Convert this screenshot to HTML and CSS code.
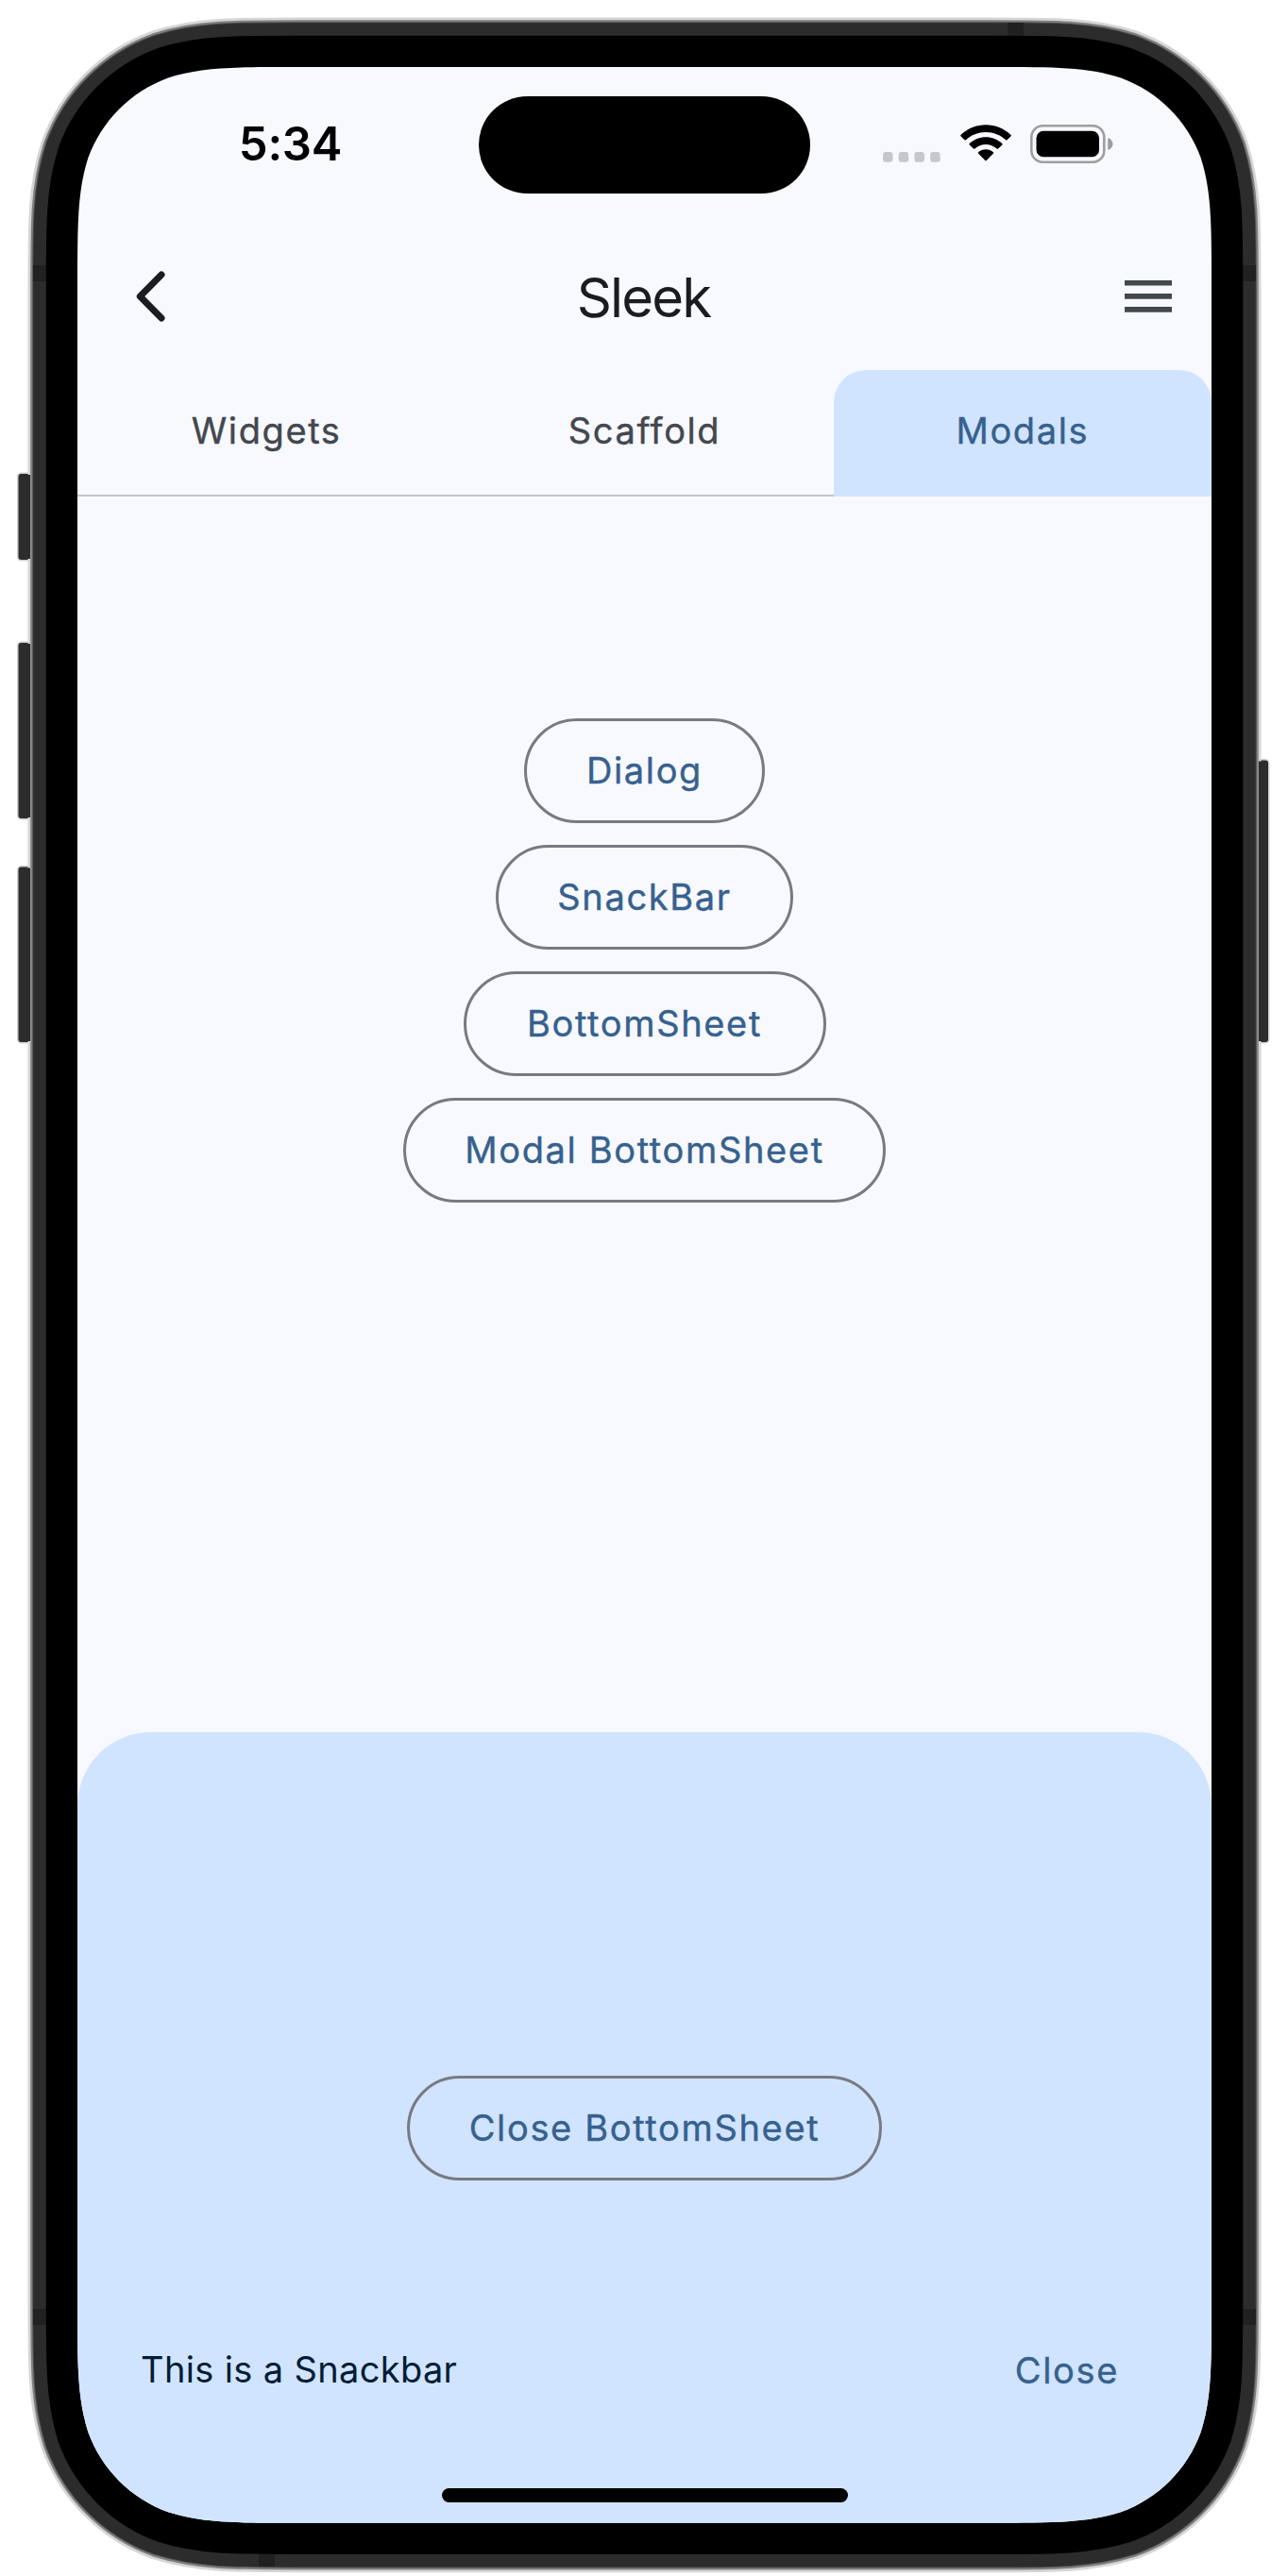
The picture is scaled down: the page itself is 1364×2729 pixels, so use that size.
FILE: index.html
```html
<!DOCTYPE html>
<html lang="en">
<head>
<meta charset="utf-8">
<title>Sleek</title>
<link rel="stylesheet" href="styles.css">
</head>
<body>
<div class="device">
  <svg class="frame" width="1364" height="2729" viewBox="0 0 1364 2729" aria-hidden="true">
    <defs>
      <path id="body" d="M0 232.4C0 165.5 0 132 11.4 96C25.7 56.7 56.7 25.7 96 11.4C132 0 165.5 0 232.4 0H968.6C1035.5 0 1069 0 1105 11.4C1144.3 25.7 1175.3 56.7 1189.6 96C1201 132 1201 165.5 1201 232.4V2369.3C1201 2436.2 1201 2469.7 1189.6 2505.7C1175.3 2545 1144.3 2576 1105 2590.3C1069 2601.7 1035.5 2601.7 968.6 2601.7H232.4C165.5 2601.7 132 2601.7 96 2590.3C56.7 2576 25.7 2545 11.4 2505.7C0 2469.7 0 2436.2 0 2369.3Z"/>
    </defs>
    <g class="side-keys">
      <rect x="19.5" y="502" width="16" height="91" rx="3"/>
      <rect x="19.5" y="681" width="16" height="186" rx="3"/>
      <rect x="19.5" y="918.500" width="16" height="185.500" rx="3"/>
      <rect x="1328" y="805.500" width="15" height="298.500" rx="3"/>
    </g>
    <g transform="translate(82 71)">
      <use href="#body" class="rim rim-light"/>
      <use href="#body" class="rim rim-mid"/>
      <use href="#body" class="rim rim-edge"/>
      <use href="#body" class="rim rim-dark"/>
    </g>
    <g class="key-roots">
      <path d="M29 503H32V592H29ZM29 682H32V866H29ZM29 919.500H32V1103H29ZM1333 806.500H1337V1103H1333Z"/>
    </g>
    <g class="bands">
      <rect x="35" y="281" width="14" height="17"/>
      <rect x="35" y="2446" width="14" height="17"/>
      <rect x="1315" y="281" width="15" height="17"/>
      <rect x="1315" y="2446" width="15" height="17"/>
      <rect x="1067" y="24" width="17" height="15"/>
      <rect x="274" y="2705" width="17" height="14"/>
    </g>
    <g transform="translate(82 71)">
      <use href="#body" class="bezel"/>
    </g>
  </svg>

  <div class="screen">
    <header class="status">
      <span class="time">5:34</span>
      <span class="island"></span>
      <div class="indicators">
        <svg class="cell" width="61" height="11" viewBox="0 0 61 11"><rect x="0" width="10.500" height="10.800" rx="3"/><rect x="16.700" width="10.500" height="10.800" rx="3"/><rect x="33.400" width="10.500" height="10.800" rx="3"/><rect x="50.100" width="10.500" height="10.800" rx="3"/></svg>
        <svg class="wifi" width="54" height="39" viewBox="0 0 54 39"><path d="M27 0.300C37 0.300 46.500 4.200 53.600 11C54 11.400 54 12 53.600 12.300L49.500 16.300C49.200 16.700 48.600 16.700 48.200 16.300C42.500 11 35 8 27 8S11.500 11 5.800 16.300C5.400 16.700 4.800 16.700 4.500 16.300L0.400 12.300C0 12 0 11.400 0.400 11C7.500 4.200 17 0.300 27 0.300ZM27 13.200C33.500 13.200 39.600 15.600 44.300 20C44.700 20.400 44.700 21 44.300 21.400L40 25.600C39.600 25.900 39 25.900 38.700 25.600C35.500 22.700 31.400 21 27 21S18.500 22.700 15.300 25.600C15 25.900 14.400 25.900 14 25.600L9.700 21.400C9.300 21 9.300 20.400 9.700 20C14.400 15.600 20.500 13.200 27 13.200ZM27 26.200C30 26.200 32.800 27.300 35 29.200C35.400 29.500 35.400 30.200 35 30.500L27.700 38C27.300 38.400 26.700 38.400 26.300 38L19 30.500C18.600 30.200 18.600 29.500 19 29.200C21.200 27.300 24 26.200 27 26.200Z"/></svg>
        <svg class="battery" width="88" height="41" viewBox="0 0 88 41"><rect class="shell" x="1.300" y="1.300" width="77" height="38.400" rx="12"/><rect x="6.500" y="6.700" width="66.500" height="27.600" rx="7.500"/><path class="nub" d="M82.200 14V27C85.500 25.800 87.500 23.500 87.500 20.500S85.500 15.200 82.200 14Z"/></svg>
      </div>
    </header>

    <nav class="appbar">
      <svg class="back" width="32" height="54" viewBox="0 0 32 54"><path d="M27 4L4.300 27L27 50"/></svg>
      <h1 class="title">Sleek</h1>
      <svg class="menu" width="50" height="34" viewBox="0 0 50 34"><path d="M0 0H50V5.600H0ZM0 14.100H50V19.700H0ZM0 28.100H50V33.700H0Z"/></svg>
    </nav>

    <div class="tabs">
      <span class="tab">Widgets</span>
      <span class="tab">Scaffold</span>
      <span class="tab tab-active">Modals</span>
    </div>

    <main class="content">
      <button class="btn btn-dialog">Dialog</button>
      <button class="btn btn-snack">SnackBar</button>
      <button class="btn btn-sheet">BottomSheet</button>
      <button class="btn btn-modal">Modal BottomSheet</button>
    </main>

    <section class="sheet">
      <button class="btn btn-close-sheet">Close BottomSheet</button>
      <div class="snackbar">
        <span class="message">This is a Snackbar</span>
        <span class="action">Close</span>
      </div>
      <span class="home"></span>
    </section>
  </div>
</div>
</body>
</html>
```
FILE: styles.css
```css
* { box-sizing: border-box; }

body {
  margin: 0;
  background: #fff;
  font-family: Inter, "Liberation Sans", sans-serif;
}

.device {
  position: relative;
  width: 1364px;
  height: 2729px;
  padding: 71px 81px 0 82px;
  overflow: hidden;
}

.frame {
  position: absolute;
  top: 0;
  left: 0;
}

.side-keys { fill: #2c2c2c; stroke: #cfcfcf; stroke-width: 3px; paint-order: stroke; }
.key-roots { fill: #2c2c2c; }
.rim { fill: none; }
.rim-light { stroke: #d6d6d6; stroke-width: 105px; }
.rim-mid { stroke: #808080; stroke-width: 99.5px; }
.rim-edge { stroke: #505050; stroke-width: 95.5px; }
.rim-dark { stroke: #2c2c2c; stroke-width: 93.5px; }
.bands { fill: #212121; }
.bezel { fill: #000; stroke: #000; stroke-width: 66.5px; }

.screen {
  position: relative;
  display: flex;
  flex-direction: column;
  width: 1201px;
  height: 2601.7px;
  background: #f8f9ff;
  clip-path: path("M0 232.4C0 165.5 0 132 11.4 96C25.7 56.7 56.7 25.7 96 11.4C132 0 165.5 0 232.4 0H968.6C1035.5 0 1069 0 1105 11.4C1144.3 25.7 1175.3 56.7 1189.6 96C1201 132 1201 165.5 1201 232.4V2369.3C1201 2436.2 1201 2469.7 1189.6 2505.7C1175.3 2545 1144.3 2576 1105 2590.3C1069 2601.7 1035.5 2601.7 968.6 2601.7H232.4C165.5 2601.7 132 2601.7 96 2590.3C56.7 2576 25.7 2545 11.4 2505.7C0 2469.7 0 2436.2 0 2369.3Z");
}

.status {
  display: grid;
  grid-template-columns: 425px 351px 425px;
  align-items: center;
  height: 165px;
}

.time {
  padding: 0 0 2px 26px;
  color: #000;
  font-size: 49px;
  font-weight: 600;
  line-height: 60px;
  letter-spacing: -0.2px;
  text-align: center;
}

.island {
  height: 103px;
  border-radius: 52px;
  background: #000;
}

.indicators {
  display: flex;
  align-items: flex-end;
  height: 41px;
  margin-top: -3px;
  padding-left: 77px;
}

.cell { margin: 0 20.5px 1px 0; fill: #c6c7cc; }
.wifi { margin: 0 20.5px 1.5px 0; }
.battery .shell { fill: none; stroke: #9d9da2; stroke-width: 2.6px; }
.battery .nub { fill: #9d9da2; }

.appbar {
  display: flex;
  align-items: center;
  justify-content: space-between;
  height: 156px;
  padding: 0 42px 0 62px;
}

.back { fill: none; stroke: #191c20; stroke-width: 7px; stroke-linecap: round; stroke-linejoin: round; }
.menu { fill: #43474e; }

.title {
  margin: 2px 4px 0 0;
  color: #191c20;
  font-size: 58px;
  font-weight: 400;
  line-height: 70px;
  letter-spacing: -1.8px;
}

.tabs {
  display: grid;
  grid-template-columns: 1fr 1fr 1fr;
  height: 134px;
  background: linear-gradient(#c3c6cf, #c3c6cf) bottom / 100% 2.5px no-repeat;
}

.tab {
  display: flex;
  align-items: center;
  justify-content: center;
  padding-bottom: 6px;
  color: #43474e;
  font-size: 38px;
  font-weight: 400;
  letter-spacing: 1.6px;
  -webkit-text-stroke: 0.4px currentColor;
}

.tab-active {
  border-radius: 34px 34px 0 0;
  background: #d1e4ff;
  color: #36618e;
}

.content {
  display: flex;
  flex-direction: column;
  align-items: center;
  gap: 22.5px;
  height: 1309px;
  padding-top: 234.5px;
}

.btn {
  display: flex;
  align-items: center;
  justify-content: center;
  height: 111.5px;
  padding: 0;
  border: 3px solid #777a82;
  border-radius: 56px;
  background: none;
  color: #36618e;
  font-family: inherit;
  font-size: 38px;
  font-weight: 400;
  letter-spacing: 1.65px;
  -webkit-text-stroke: 0.4px currentColor;
}

.btn-dialog { width: 255px; }
.btn-snack { width: 315px; }
.btn-sheet { width: 384px; }
.btn-modal { width: 511px; }
.btn-close-sheet { width: 503px; }

.sheet {
  display: flex;
  flex-direction: column;
  align-items: center;
  height: 837.7px;
  padding-top: 363.5px;
  border-radius: 78px 78px 0 0;
  background: #d1e4ff;
}

.snackbar {
  display: flex;
  align-items: center;
  justify-content: space-between;
  width: 100%;
  height: 100px;
  margin-top: 151px;
  padding: 0 98px 0 67px;
}

.message {
  padding-bottom: 3px;
  color: #001d36;
  font-size: 38px;
  letter-spacing: 0.35px;
}

.action {
  color: #36618e;
  font-size: 38px;
  font-weight: 400;
  letter-spacing: 1.65px;
  -webkit-text-stroke: 0.4px currentColor;
}

.home {
  width: 430px;
  height: 14.5px;
  margin-top: 75px;
  border-radius: 8px;
  background: #000;
}
```
